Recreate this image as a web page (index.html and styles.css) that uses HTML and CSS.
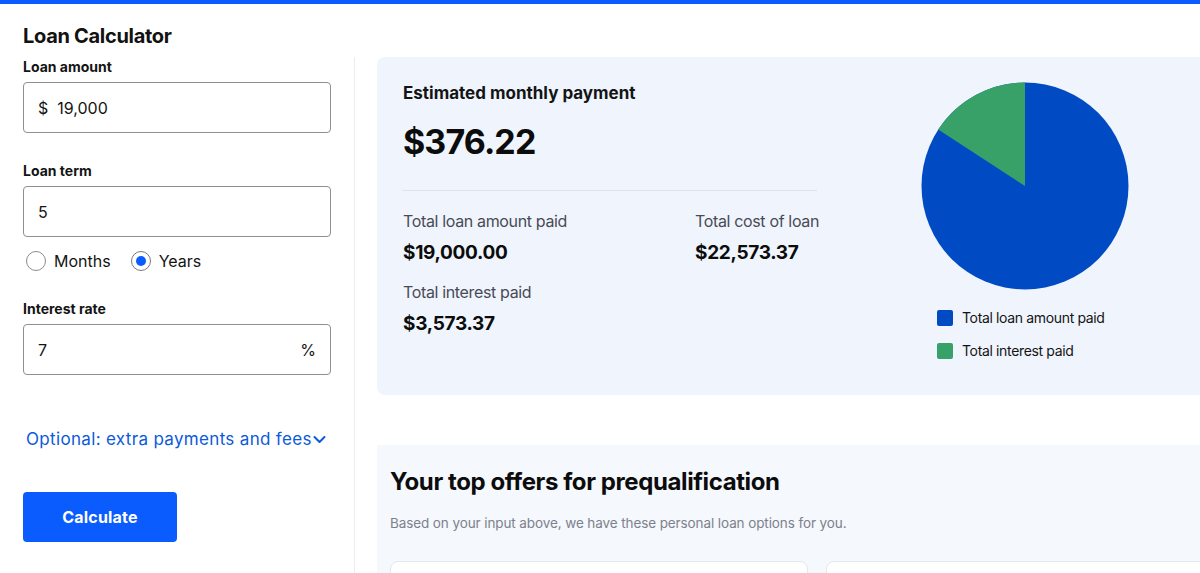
FILE: index.html
```html
<!DOCTYPE html>
<html lang="en">
<head>
<meta charset="utf-8">
<title>Loan Calculator</title>
<link rel="stylesheet" href="styles.css">
</head>
<body>
<div class="topbar"></div>
<h1 class="title">Loan Calculator</h1>
<div class="columns">
  <div class="left">
    <div class="label">Loan amount</div>
    <div class="field"><span class="prefix">$</span><span class="value">19,000</span></div>

    <div class="label label-gap">Loan term</div>
    <div class="field"><span class="value">5</span></div>

    <div class="radios">
      <label class="radio"><span class="dot"></span>Months</label>
      <label class="radio"><span class="dot checked"></span>Years</label>
    </div>

    <div class="label label-gap2">Interest rate</div>
    <div class="field field-split"><span class="value">7</span><span class="suffix">%</span></div>

    <a class="optional" href="#">Optional: extra payments and fees<svg class="chev" width="13" height="9" viewBox="0 0 13 9"><path d="M1.5 2 L6.5 7 L11.5 2" fill="none" stroke="#0b5ad9" stroke-width="2" stroke-linecap="round" stroke-linejoin="round"/></svg></a>

    <button class="calc">Calculate</button>
  </div>

  <div class="right">
    <div class="result-card">
      <div class="result-info">
        <div class="est-label">Estimated monthly payment</div>
        <div class="est-value">$376.22</div>
        <div class="divider"></div>
        <div class="stats">
          <div class="stat">
            <div class="stat-label">Total loan amount paid</div>
            <div class="stat-value">$19,000.00</div>
          </div>
          <div class="stat">
            <div class="stat-label">Total cost of loan</div>
            <div class="stat-value">$22,573.37</div>
          </div>
          <div class="stat">
            <div class="stat-label">Total interest paid</div>
            <div class="stat-value">$3,573.37</div>
          </div>
        </div>
      </div>
      <div class="chart">
        <svg class="pie" width="208" height="208" viewBox="-104 -104 208 208">
          <circle cx="0" cy="0" r="103.5" fill="#004bc4"/>
          <path d="M0 0 L0 -103.5 A103.5 103.5 0 0 0 -86.8 -56.4 Z" fill="#37a168"/>
        </svg>
        <div class="legend">
          <div class="legend-item"><span class="swatch swatch-blue"></span>Total loan amount paid</div>
          <div class="legend-item"><span class="swatch swatch-green"></span>Total interest paid</div>
        </div>
      </div>
    </div>

    <div class="offers">
      <h2 class="offers-title">Your top offers for prequalification</h2>
      <p class="offers-sub">Based on your input above, we have these personal loan options for you.</p>
      <div class="offer-cards">
        <div class="offer-card offer-card-1"></div>
        <div class="offer-card offer-card-2"></div>
      </div>
    </div>
  </div>
</div>
</body>
</html>
```
FILE: styles.css
```css
html, body {
  margin: 0;
  padding: 0;
}
body {
  width: 1200px;
  height: 573px;
  overflow: hidden;
  background: #ffffff;
  font-family: "Inter", "Lato", "Liberation Sans", sans-serif;
  color: #141414;
}
.topbar {
  height: 4px;
  background: #0a5cff;
}
.title {
  margin: 0;
  padding: 18px 0 0 23px;
  font-size: 20px;
  line-height: 28px;
  font-weight: 700;
  letter-spacing: -0.3px;
  color: #121212;
}
.columns {
  display: flex;
  margin-top: 7px;
}
.left {
  width: 308px;
  padding: 0 23px 0 23px;
  border-right: 1px solid #ececec;
  display: flex;
  flex-direction: column;
  align-items: flex-start;
  height: 516px;
}
.label {
  font-size: 14px;
  line-height: 20px;
  font-weight: 700;
  color: #141414;
}
.label-gap {
  margin-top: 28px;
}
.label-gap2 {
  margin-top: 26px;
}
.field {
  box-sizing: border-box;
  width: 308px;
  height: 51px;
  margin-top: 5px;
  border: 1px solid #8f8f8f;
  border-radius: 4px;
  display: flex;
  align-items: center;
  padding: 0 14px 0 14px;
  font-size: 16px;
  color: #141414;
}
.field-split {
  justify-content: space-between;
}
.prefix {
  margin-right: 9px;
}
.suffix {
  font-size: 16px;
}
.radios {
  display: flex;
  gap: 20px;
  margin-top: 12px;
  height: 24px;
  align-items: center;
  padding-left: 3px;
}
.radio {
  display: flex;
  align-items: center;
  font-size: 16px;
  color: #141414;
}
.dot {
  box-sizing: border-box;
  width: 20px;
  height: 20px;
  border-radius: 50%;
  border: 1px solid #8c8c8c;
  margin-right: 8px;
  background: #fff;
  position: relative;
}
.dot.checked {
  border-color: #7a7a7a;
}
.dot.checked::after {
  content: "";
  position: absolute;
  left: 4px;
  top: 4px;
  width: 10px;
  height: 10px;
  border-radius: 50%;
  background: #0a5cff;
}
.optional {
  margin-top: 52px;
  margin-left: 3px;
  font-size: 17px;
  line-height: 24px;
  letter-spacing: 0.33px;
  color: #0b5ad9;
  text-decoration: none;
  display: flex;
  align-items: center;
}
.chev {
  margin-left: 1px;
  margin-top: 1px;
}
.calc {
  margin-top: 41px;
  width: 154px;
  height: 50px;
  border: none;
  border-radius: 4px;
  background: #0a5cff;
  color: #fff;
  font-family: inherit;
  font-size: 16px;
  font-weight: 700;
  letter-spacing: 0.2px;
  padding-bottom: 2px;
}
.right {
  padding-left: 22px;
  width: 830px;
  flex: none;
}
.result-card {
  box-sizing: border-box;
  width: 850px;
  height: 338px;
  background: #f0f5fd;
  border-radius: 8px;
  display: flex;
  padding: 24px 0 0 26px;
}
.result-info {
  width: 415px;
  flex: none;
}
.est-label {
  font-size: 17px;
  line-height: 24px;
  font-weight: 700;
  color: #141414;
}
.est-value {
  margin-top: 17px;
  font-size: 34px;
  line-height: 40px;
  font-weight: 700;
  letter-spacing: -0.9px;
  color: #0c0c0c;
}
.divider {
  margin-top: 28px;
  height: 1px;
  width: 415px;
  margin-left: -1px;
  background: #dde3ec;
}
.stats {
  margin-top: 19px;
  display: grid;
  grid-template-columns: 292px max-content;
  row-gap: 15px;
}
.stat-label {
  font-size: 16px;
  line-height: 22px;
  letter-spacing: -0.35px;
  color: #484b55;
  white-space: nowrap;
}
.stat-value {
  margin-top: 8px;
  font-size: 19px;
  line-height: 26px;
  font-weight: 700;
  letter-spacing: -0.3px;
  color: #0c0c0c;
}
.chart {
  margin-left: 103px;
  margin-top: 1px;
  display: flex;
  flex-direction: column;
  flex: none;
}
.pie {
  display: block;
}
.legend {
  margin-top: 20px;
  padding-left: 16px;
  display: flex;
  flex-direction: column;
  gap: 17px;
}
.legend-item {
  display: flex;
  align-items: center;
  font-size: 14px;
  line-height: 16px;
  letter-spacing: -0.35px;
  color: #141414;
}
.swatch {
  width: 16px;
  height: 16px;
  border-radius: 2px;
  margin-right: 9px;
}
.swatch-blue {
  background: #004bc4;
}
.swatch-green {
  background: #37a168;
}
.offers {
  margin-top: 50px;
  width: 850px;
  height: 128px;
  overflow: hidden;
  background: #f5f8fd;
  padding: 21px 0 0 13px;
  box-sizing: border-box;
}
.offers-title {
  margin: 0;
  font-size: 24px;
  line-height: 32px;
  font-weight: 700;
  letter-spacing: -0.4px;
  color: #0c0c0c;
}
.offers-sub {
  margin: 15px 0 0 0;
  font-size: 13.5px;
  line-height: 20px;
  color: #7d818c;
  letter-spacing: -0.1px;
}
.offer-cards {
  margin-top: 28px;
  display: flex;
  gap: 18px;
}
.offer-card {
  flex: none;
  height: 40px;
  background: #ffffff;
  border: 1px solid #e3e8ef;
  border-radius: 8px;
}
.offer-card-1 {
  width: 416px;
}
.offer-card-2 {
  width: 420px;
}
```
